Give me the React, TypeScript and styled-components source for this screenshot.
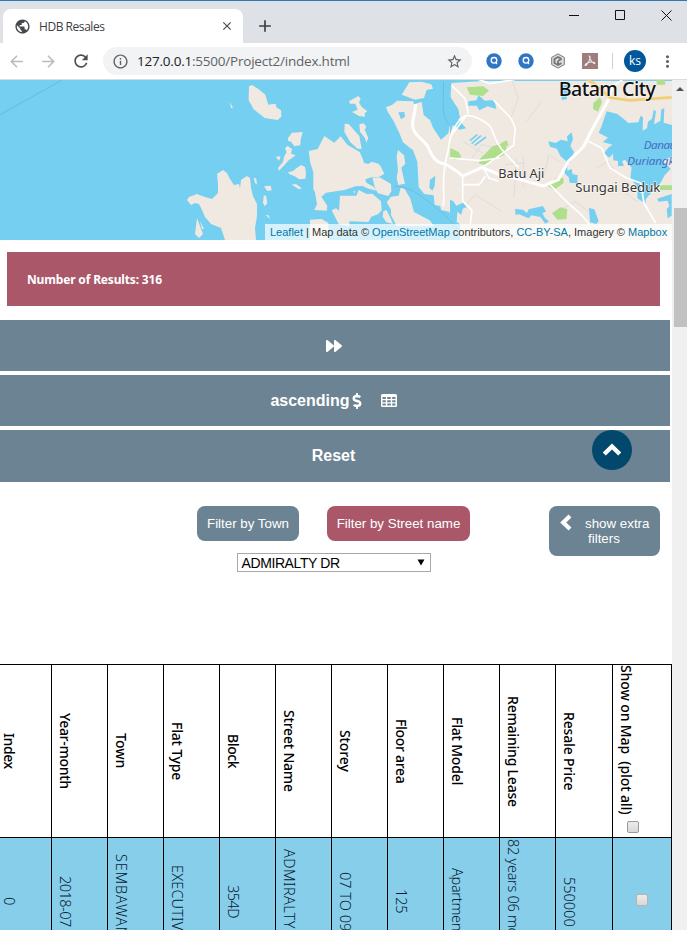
import React from "react";
import styled, { createGlobalStyle } from "styled-components";
import { MdPublic, MdArrowBack, MdArrowForward, MdRefresh, MdInfoOutline, MdStarBorder, MdMoreVert, MdClose, MdAdd } from "react-icons/md";
import { FaForward, FaDollarSign } from "react-icons/fa";

const GlobalStyle = createGlobalStyle`
  * { box-sizing: border-box; }
  body { margin: 0; background: #fff; overflow: hidden; }
`;

const slate = "#6b8392";
const rose = "#aa576a";

const Window = styled.div`
  width: 687px;
  height: 930px;
  display: flex;
  flex-direction: column;
  overflow: hidden;
  font-family: "Liberation Sans", Arial, sans-serif;
`;

const TitleBar = styled.header`
  height: 43px;
  flex: none;
  display: flex;
  align-items: flex-end;
  background: #dee1e6;
  border-top: 1px solid #2f78b7;
  color: #3c4043;
`;

const Tab = styled.div`
  width: 240px;
  height: 34px;
  margin-left: 3px;
  padding: 0 9px 0 11px;
  display: flex;
  align-items: center;
  background: #fff;
  border-radius: 8px 8px 0 0;
  svg { color: #45494d; flex: none; }
`;

const TabTitle = styled.span`
  flex: 1;
  margin-left: 8px;
  font: 12px "Open Sans", sans-serif;
  letter-spacing: -0.45px;
  white-space: nowrap;
`;

const NewTab = styled.div`
  width: 20px;
  height: 34px;
  margin-left: 12px;
  display: flex;
  align-items: center;
`;

const WindowControls = styled.div`
  margin: 0 15px 0 auto;
  align-self: flex-start;
  height: 28px;
  display: flex;
  align-items: center;
  gap: 35px;
  svg { display: block; }
`;

const Toolbar = styled.nav`
  height: 37px;
  flex: none;
  display: flex;
  align-items: center;
  padding-left: 7px;
  background: #fff;
  border-bottom: 1px solid #d8dcdf;
  color: #5f6368;
`;

const NavIcon = styled.span<{ $dim?: boolean }>`
  width: 32px;
  height: 18px;
  display: flex;
  align-items: center;
  color: ${(p) => (p.$dim ? "#babcbe" : "#4c5054")};
`;

const AddressBar = styled.div`
  width: 369px;
  height: 28px;
  padding: 0 9px;
  display: flex;
  align-items: center;
  border-radius: 14px;
  background: #f1f3f4;
`;

const Url = styled.span`
  flex: 1;
  margin-left: 8px;
  font: 13.5px "Open Sans", sans-serif;
  letter-spacing: -0.22px;
  white-space: nowrap;
  b { font-weight: 400; color: #202124; }
`;

const Extensions = styled.div`
  display: flex;
  align-items: center;
  margin-left: 14px;
  gap: 16px;
  svg { display: block; }
`;

const Divider = styled.i`
  width: 1px;
  height: 16px;
  margin: 0 11px 0 14px;
  background: #cfd1d4;
`;

const Avatar = styled.span`
  width: 22px;
  height: 22px;
  border-radius: 50%;
  background: #01579b;
  color: #fff;
  font: 12px/21px "Open Sans", sans-serif;
  text-align: center;
`;

const MenuIcon = styled.span`
  display: flex;
  margin-left: 12px;
`;

const Viewport = styled.div`
  flex: 1;
  min-height: 0;
  display: flex;
`;

const Content = styled.main`
  position: relative;
  width: 672px;
  height: 850px;
  overflow: hidden;
  flex: none;
`;

const Scrollbar = styled.aside`
  width: 15px;
  background: #f0f0f0;
  display: flex;
  flex-direction: column;
  align-items: flex-end;
`;

const ScrollArrow = styled.i`
  margin: 7px 3px 0 0;
  border: 4px solid transparent;
  border-top: 0;
  border-bottom: 4px solid #505050;
`;

const Thumb = styled.i`
  width: 13px;
  height: 119px;
  margin-top: 117px;
  background: #c1c1c1;
`;

const MapFrame = styled.section`
  position: relative;
  height: 160px;
  background: #75cff0;
  > svg { display: block; }
`;

const Attribution = styled.div`
  position: absolute;
  right: 0;
  bottom: 0;
  width: 407px;
  height: 16px;
  padding-left: 5px;
  background: rgba(255, 255, 255, 0.7);
  color: #333;
  font: 11px/16px "Liberation Sans", Arial, sans-serif;
  white-space: nowrap;
  a { color: #0078a8; }
`;

const Results = styled.div`
  width: 653px;
  height: 54px;
  margin: 12px 0 14px 7px;
  padding-left: 20px;
  background: ${rose};
  color: #fff;
  font: 700 12px/56px "Noto Sans", sans-serif;
  letter-spacing: -0.16px;
`;

const ActionStack = styled.div`
  width: 670px;
  display: grid;
  grid-template-rows: 51px 51px 52px;
  gap: 4px;
`;

const ActionBar = styled.div`
  display: flex;
  align-items: center;
  justify-content: center;
  padding-right: 3px;
  background: ${slate};
  color: #fff;
  font: 700 16px "Liberation Sans", Arial, sans-serif;
`;

const DollarGlyph = styled(FaDollarSign)`
  margin: 0 -3px 0 -1px;
`;

const TableGlyph = styled.svg`
  margin-left: 19px;
`;

const ScrollTop = styled.button`
  position: absolute;
  left: 592px;
  top: 350px;
  width: 40px;
  height: 40px;
  padding: 0 0 2px;
  border: 0;
  border-radius: 50%;
  background: #02486d;
  color: #fff;
  display: flex;
  align-items: center;
  justify-content: center;
`;

const Filters = styled.div`
  height: 182px;
  padding: 24px 12px 0 197px;
  display: flex;
  justify-content: space-between;
`;

const FilterColumn = styled.div`
  display: flex;
  flex-direction: column;
  gap: 12px;
`;

const FilterRow = styled.div`
  display: flex;
  gap: 28px;
`;

const FilterButton = styled.button<{ $width: number; $active?: boolean }>`
  width: ${(p) => p.$width}px;
  height: 35px;
  padding: 0;
  border: 0;
  border-radius: 8px;
  background: ${(p) => (p.$active ? rose : slate)};
  color: #fff;
  font: 13.333px "Liberation Sans", Arial, sans-serif;
  white-space: nowrap;
`;

const ExtraButton = styled(FilterButton)`
  height: 50px;
  display: flex;
  padding: 10px 0 0 11px;
  line-height: 15px;
  svg { margin: -2px 13px 0 0; flex: none; }
`;

const ExtraLabel = styled.span`
  text-align: left;
  span { margin-left: 3px; }
`;

const Select = styled.div`
  width: 194px;
  height: 19px;
  margin-left: 40px;
  padding: 0 5px 0 3.5px;
  display: flex;
  justify-content: space-between;
  align-items: center;
  border: 1px solid #a9a9a9;
  background: #fff;
  color: #000;
  font-size: 14px;
  letter-spacing: -0.4px;
`;

const Table = styled.div`
  display: grid;
  grid-template-columns: repeat(10, 56px) 57px 59px;
  grid-template-rows: 173px 128px;
  margin-left: -4px;
  border-top: 1px solid #000;
`;

const Cell = styled.div<{ $head?: boolean }>`
  border-right: 1px solid #000;
  border-bottom: 1px solid #000;
  background: ${(p) => (p.$head ? "#fff" : "#87ceeb")};
  color: ${(p) => (p.$head ? "#000" : "#08202e")};
  writing-mode: vertical-rl;
  display: flex;
  flex-direction: column;
  justify-content: flex-end;
  align-items: center;
  padding-left: 5px;
  white-space: nowrap;
  font: ${(p) => (p.$head ? "500 14px" : "300 14.5px")}/17px "Noto Sans", sans-serif;
`;

const CellText = styled.span<{ $spacing?: number }>`
  letter-spacing: ${(p) => p.$spacing ?? 0}px;
`;

const CheckCell = styled(Cell)`
  writing-mode: horizontal-tb;
  flex-direction: column;
  justify-content: ${(p) => (p.$head ? "space-between" : "center")};
  align-items: ${(p) => (p.$head ? "flex-start" : "center")};
  padding: 0 0 ${(p) => (p.$head ? 4 : 3)}px ${(p) => (p.$head ? 5 : 0)}px;
`;

const CheckLabel = styled.span`
  writing-mode: vertical-rl;
  white-space: pre;
  letter-spacing: -0.1px;
`;

const Check = styled.i<{ $indent?: boolean }>`
  width: 12px;
  height: 12px;
  margin-left: ${(p) => (p.$indent ? 9 : 0)}px;
  border: 1px solid ${(p) => (p.$indent ? "#999" : "#b9b1aa")};
  border-radius: 2px;
  background: linear-gradient(#ececec, #d8d8d8);
`;

const columns: { head: string; value: string; headSpacing: number; spacing?: number }[] = [
  { head: "Index", value: "0", headSpacing: -0.4 },
  { head: "Year-month", value: "2018-07", headSpacing: -0.3, spacing: -0.5 },
  { head: "Town", value: "SEMBAWANG", headSpacing: 0, spacing: 0.8 },
  { head: "Flat Type", value: "EXECUTIVE", headSpacing: -0.2, spacing: 0.15 },
  { head: "Block", value: "354D", headSpacing: -0.4, spacing: -0.5 },
  { head: "Street Name", value: "ADMIRALTY DR", headSpacing: -0.2, spacing: 0.4 },
  { head: "Storey", value: "07 TO 09", headSpacing: -0.1, spacing: 0 },
  { head: "Floor area", value: "125", headSpacing: -0.3, spacing: -0.1 },
  { head: "Flat Model", value: "Apartment", headSpacing: -0.2, spacing: -0.3 },
  { head: "Remaining Lease", value: "82 years 06 months", headSpacing: -0.2, spacing: -0.3 },
  { head: "Resale Price", value: "550000", headSpacing: -0.15, spacing: 0 },
];

const SearchBadge = () => (
  <svg width="16" height="16" viewBox="0 0 16 16" fill="none">
    <circle cx="8" cy="8" r="7.7" fill="#2f77c2" />
    <circle cx="8" cy="7.3" r="2.8" stroke="#fff" strokeWidth="1.3" />
    <path d="m9.5 9 1.5 2" stroke="#fff" strokeWidth="1.3" />
  </svg>
);

const IslandMap = () => (
  <svg width="672" height="160" viewBox="0 0 672 160">
    <path d="M0 35C18 24 38 14 62 0" fill="none" stroke="#66bbdc" strokeWidth="1" />
    <g fill="#efe9e1">
      <path d="M187 120l2-3 8-3 8 3 7 2 6-6 0-9-1-10 6-4 4 3 3 6 4 6 5-1 1 4 1-8 6-4 3 2 1 10 2 8 4 8 0 12-2 12 1 12h-31l-4-12-10-4-6-7-3-7-3-6-4-1-4 2z" />
      <path d="M197 138l-2 16 4 4 4-4zM200 141l4 8-2 0zM230 22l3 6-2 0z" />
      <g transform="translate(230 -2) scale(.33333)">
        <path d="M57 25L66 21 86 34 106 50 115 80 137 77 139 88 153 97 154 116 143 126 104 120 71 94 56 67Z" />
        <path d="M174 180l12-16 32-2-6 23-1 17-18 3-9-13-10-4zM165 210l8-6 13 9-3 14 14 5-21 15-15 17-14 14-3-8 15-19 4-17 7-11zM137 236l15-1-5 14zM174 283l15-4 11-9 14-9 11 6 3 18-2 17-19 2-14-10-14-5zM185 320l13-2 17 13-8 3z" />
        <path d="M236 219l27-6 20-39 30 20 19-19 20 25 37 22 9 20 4 13 13 3 10-7 20 6 7 8 11 22-16 10-22 1-19 6 3 10 22 12 9 12-24-6-18-8-21 1-34 11-55 8-14 12 9 14 9 14-2 14-37-2 8-17-6-36-5-10 0-50-9-28z" />
        <path d="M344 137l12 1 32 36 7 39-12-1-22-19-18-31zM357 70l28-16 7 8-5 12 9 14 16 12-8 6 1 10-18-2-21-12 17-7-7-18-16 0zM388 139l13-3 8 10-5 9 11 25-6 14-4-13-15-20z" />
        <path d="M427 299l21-1 15 8 20 12 1 22-9 14-31-8-9-16zM504 216l18 16 4 25-12 12 11 48-20 4-5-20 4-24-4-41z" />
        <path d="M305 397l13-6 9 7 3-45 49 0 7-17 24 12 17-1 26 23 2 27-11 12-20 7-9 16-57-2 0 14-31-4zM240 425l35-2 20 12v52h-55zM460 400l9-4 11 20 9 22-20-5-11-17zM470 373l13-17 23-3 6-24 12 4 17 29 11 40 47 25 13 17H500l-17-32 0-17z" />
        <path d="M71 298l8 5 2 17-6-5zM102 325l20-2 3 14-13 2zM101 354l7-2 4 24-8 9-5-11zM107 411l9 1 4 11zM370 340l6-1-2 8z" />
        <path d="M515 50l23-37 36-2 30 8 5 13-19 4-8 24-27 5zM487 80l14-12 49 2 2 9 23-8 6 40 19 15 9 23 24 36 22-19 5-28 30-18-5-27-24-28 3-50 95-6h588v480H690v-50l-23-16-10-22-24-5-2-12-17-3-3-29-28-4-17-21-4-76-13-34-30-24-11-28-16-34-19-30-5-13z" />
      </g>
    </g>
    <g transform="translate(230 -2) scale(.33333)" fill="#75cff0">
      <path d="M505 103l18-1 2 14-12 8zM600 305l16-12-2 30-7 15-9-9zM590 116l4-25 9-17-3 24 8 12-15 12z" />
      <path d="M495 325c60 0 100 50 150 85l45 50" fill="none" stroke="#68bfdd" strokeWidth="3" />
      <path d="M641 10c0 60-10 110 22 135" fill="none" stroke="#68bfdd" strokeWidth="3" />
    </g>
    <g transform="translate(450 -2) scale(.33333)">
      <g fill="none" stroke="#e0dcdc" strokeWidth="3">
        <path d="M38 190l60 35M185 5l20 55-22 60M230 130l45-60M282 290l15-60 30 20M525 8v50M560 30l90-15M440 270l35-20 22 32M40 390l35-40 80 50M520 340l40 30 65-40M340 390l35-20 40 30M200 240l-8 120M220 235l0 90M165 260l60-5M60 250l35-50 45 10" />
      </g>
      <g fill="#afdf8c">
        <path d="M50 28l50-3 17 13-18 16-39-4zM92 240l36-35 42-13-2 35-62 34-20-5zM1 210l25 12 9 15-20 8-15-8zM292 323l25-22 23-2 1 16-28 20zM430 75l20-17 6 14-12 29-15-8zM306 405l26-17 20 6-3 29-27 2zM630 322h37v14h-37zM620 5h25v15h-25zM153 195l17-8 6 14-14 8z" />
      </g>
      <g fill="#75cff0">
        <path d="M0 54l21 34 3 35 24 28-19 4-20-14-9 28zM55 70l24-3 7-15 18 16 29-2 6 27-27-8-24 12-8-14-25 0z" />
        <path d="M295 190l22 5 16-10 20 5-2-15 14-12 4 21-8 20 11 18-10 29-10 9 0 18 13-5 3 16 15 2-1 25-23-2-3-17-10-8-5-18 9-20-18-16-12-23-20-6z" />
        <path d="M470 100l32 8 20 16 13 11 30-2 7-20 7 5-1 40 13-7 3-20 12-9 5-26 7 4-6 39 19-10 3-35 9-3-2 43 25 7v94l-28 14 24 23-18 20-16 29-23 4-4 25-12-5-3 32-24-17 1-32-22-28 4-31-20-24-9 5 6 13-18 2 0-16-14-2-1-20-11 12-16-13 14-18 12-8-30-8 16-13-28-15 7-15z" />
        <path d="M0 365l10 5 9 13 20-9 11 13-12 5-4 18-12-9-2 31-20-5zM195 393l24 2 12 11 5-12 43-10 9 17-11 4 8 15 12 10-11 7-15-20-27-5-8 9-29-12-10 2zM417 390l16 4 13 35-7 9-19-5zM622 362l43-14v65l-12 8-3-27 8-9-5-17-28 3zM578 330l19 2 3 16-15 18-11-10zM335 24l20-5-5 45-15 2z" />
        <path d="M60 188l22-18M65 197l28-24M74 202l34-25" fill="none" stroke="#75cff0" strokeWidth="5" />
      </g>
      <g fill="none" stroke="#fff" strokeLinejoin="round">
        <path d="M-103 78C-104 112-120 135-108 158-95 180-75 190-66 207-52 240-40 255-15 258Q10 270 38 294L97 268 152 292 209 304 280 324 325 305 355 250 400 207 427 153 465 85 480 57" strokeWidth="9" />
        <path d="M0 0h75l45 17 75-13M5 22l40 40 10 45M130 66l54 56 12 30-5 50-56 40-36 25M-15 262C-25 320-15 345-20 385M50 112C20 125 0 165-5 215L-15 258M50 112c20 0 45 10 71 33l20 47 13 21 51 55M50 112L5 170M0 240l90 8 60-8M100 270l17 30 30 10M38 294v75l28 28-5 40M38 320h50l18-25M300 320l52 53 45 40 20 25M415 190l40 20 25 60 50 30 42 15 10 60 35 60" strokeWidth="5" />
        <path d="M480 55l8-30 30-20" strokeWidth="5" />
      </g>
      <path d="M412 5l20 12 48 42 60 8 125-9" fill="none" stroke="#f3ce75" strokeWidth="8" />
      <g fontFamily='"Noto Sans", sans-serif' stroke="#fff" paintOrder="stroke" strokeWidth="4" strokeOpacity=".7">
        <text x="326" y="54" fill="#111" fontWeight="500" fontSize="59" textLength="292">Batam City</text>
        <text x="145" y="300" fill="#373737" fontSize="39" textLength="138" lengthAdjust="spacingAndGlyphs">Batu Aji</text>
        <text x="376" y="342" fill="#373737" fontSize="39" textLength="255" lengthAdjust="spacingAndGlyphs">Sungai Beduk</text>
        <g fill="#466dc1" stroke="none" fontStyle="italic" fontSize="35">
          <text x="581" y="214" textLength="98">Danau</text>
          <text x="532" y="260" textLength="160">Duriangka</text>
        </g>
      </g>
    </g>
  </svg>
);

export default function App() {
  return (
    <Window>
      <GlobalStyle />
      <TitleBar>
        <Tab>
          <MdPublic size={17} />
          <TabTitle>HDB Resales</TabTitle>
          <MdClose size={14} />
        </Tab>
        <NewTab><MdAdd size={20} /></NewTab>
        <WindowControls>
          <svg width="11" height="11" stroke="#111"><path d="M0 5.5h10" /></svg>
          <svg width="11" height="11" stroke="#111" fill="none"><path d="M.5.5h9v9h-9z" /></svg>
          <svg width="11" height="11" stroke="#111"><path d="M.5.5l10 10M10.500.5l-10 10" /></svg>
        </WindowControls>
      </TitleBar>
      <Toolbar>
        <NavIcon $dim><MdArrowBack size={19} /></NavIcon>
        <NavIcon $dim><MdArrowForward size={19} /></NavIcon>
        <NavIcon><MdRefresh size={20} /></NavIcon>
        <AddressBar>
          <MdInfoOutline size={17} />
          <Url><b>127.0.0.1</b>:5500/Project2/index.html</Url>
          <MdStarBorder size={17} />
        </AddressBar>
        <Extensions>
          <SearchBadge />
          <SearchBadge />
          <svg width="16" height="16" viewBox="0 0 16 16" fill="none" stroke="#777">
            <path d="M8 .9l6.300 3.500v7.200L8 15.100l-6.300-3.500V4.400z" fill="#ddd" />
            <path d="M11.500 5.800L8 4 4.500 6v4L8 12l3.500-1.800M8 8l3.500-2M8 8v3" strokeWidth="1.900" />
          </svg>
          <svg width="16" height="16" viewBox="0 0 16 16" fill="none">
            <path d="M0 0h16v16H0z" fill="#9d7e7d" />
            <path d="M7.300 3c1.200 0 .8 3.200-.7 6S3.200 13 3 12.200 5.500 9.300 8.500 9s4.800.6 4.200 1.300S8 8.500 7.300 3z" stroke="#eee" strokeWidth="1.100" />
          </svg>
        </Extensions>
        <Divider />
        <Avatar>ks</Avatar>
        <MenuIcon><MdMoreVert size={19} /></MenuIcon>
      </Toolbar>
      <Viewport>
        <Content>
          <MapFrame>
            <IslandMap />
            <Attribution>
              <a>Leaflet</a> | Map data © <a>OpenStreetMap</a> contributors, <a>CC-BY-SA</a>, Imagery © <a>Mapbox</a>
            </Attribution>
          </MapFrame>
          <Results>Number of Results: 316</Results>
          <ActionStack>
            <ActionBar><FaForward size={16} /></ActionBar>
            <ActionBar>
              ascending<DollarGlyph size={16} />
              <TableGlyph width="16" height="13" viewBox="0 0 16 13">
                <rect width="16" height="13" rx="1.500" fill="#fff" />
                <path d="M1.500 3h3.300v2H1.500zM6.200 3h3.600v2H6.200zM11.200 3h3.300v2h-3.300zM1.500 6.300h3.300v2H1.500zM6.200 6.300h3.600v2H6.200zM11.200 6.300h3.300v2h-3.300zM1.500 9.600h3.300v2H1.500zM6.200 9.600h3.600v2H6.200zM11.200 9.600h3.300v2h-3.300z" fill={slate} />
              </TableGlyph>
            </ActionBar>
            <ActionBar>Reset</ActionBar>
          </ActionStack>
          <Filters>
            <FilterColumn>
              <FilterRow>
                <FilterButton $width={102}>Filter by Town</FilterButton>
                <FilterButton $width={143} $active>Filter by Street name</FilterButton>
              </FilterRow>
              <Select>
                ADMIRALTY DR
                <svg width="8" height="7"><path d="M.5.5h7L4 6.500z" /></svg>
              </Select>
            </FilterColumn>
            <ExtraButton $width={111}>
              <svg width="12" height="17" viewBox="0 0 12 17" fill="none" stroke="#fff" strokeWidth="4.200">
                <path d="M10 2L3.200 8.500 10 15" />
              </svg>
              <ExtraLabel>show extra<br /><span>filters</span></ExtraLabel>
            </ExtraButton>
          </Filters>
          <Table>
            {columns.map((c) => (
              <Cell key={c.head} $head><CellText $spacing={c.headSpacing}>{c.head}</CellText></Cell>
            ))}
            <CheckCell $head>
              <CheckLabel>Show on Map  (plot all)</CheckLabel>
              <Check $indent />
            </CheckCell>
            {columns.map((c) => (
              <Cell key={c.head}><CellText $spacing={c.spacing}>{c.value}</CellText></Cell>
            ))}
            <CheckCell><Check /></CheckCell>
          </Table>
          <ScrollTop aria-label="Scroll to top">
            <svg width="20" height="13" viewBox="0 0 20 13" fill="none" stroke="#fff" strokeWidth="4.400">
              <path d="M2.300 11L10 3.500 17.700 11" />
            </svg>
          </ScrollTop>
        </Content>
        <Scrollbar>
          <ScrollArrow />
          <Thumb />
        </Scrollbar>
      </Viewport>
    </Window>
  );
}
